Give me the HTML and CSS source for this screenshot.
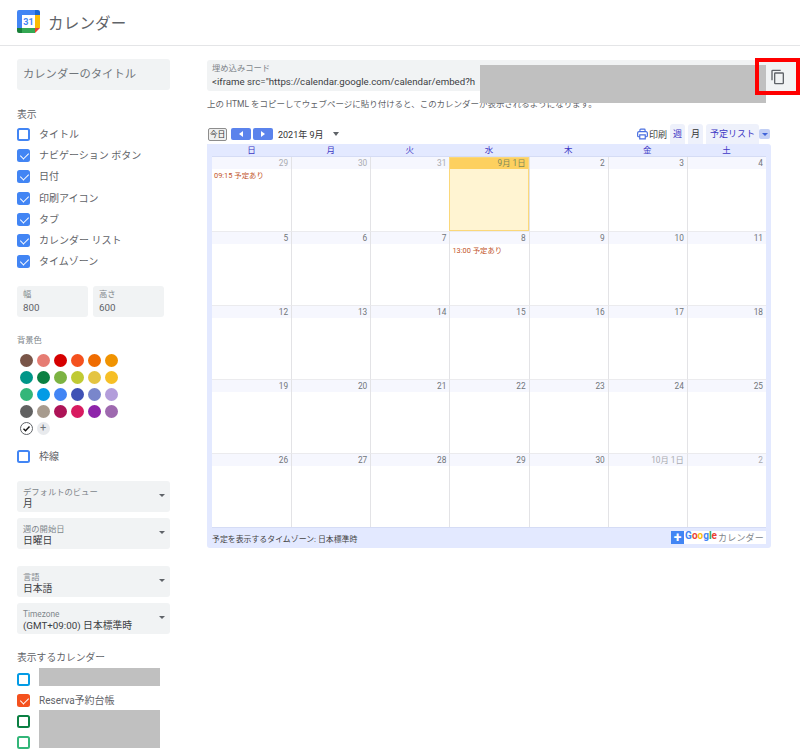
FILE: index.html
```html
<!DOCTYPE html>
<html lang="ja">
<head>
<meta charset="utf-8">
<title>カレンダー</title>
<link rel="stylesheet" href="styles.css">
</head>
<body>
<header class="topbar">
  <svg class="logo" viewBox="0 0 23 23" width="23" height="23">
    <rect x="5" y="5" width="13" height="13" fill="#fff"/>
    <path d="M2 0h16v5H5v13H0V2a2 2 0 0 1 2-2z" fill="#4285f4"/>
    <path d="M18 0h3a2 2 0 0 1 2 2v3h-5z" fill="#1967d2"/>
    <rect x="18" y="5" width="5" height="13" fill="#fbbc04"/>
    <rect x="5" y="18" width="13" height="5" fill="#34a853"/>
    <path d="M0 18h5v5H2a2 2 0 0 1-2-2z" fill="#188038"/>
    <path d="M18 18h5l-5 5z" fill="#ea4335"/>
    <text x="11.500" y="15" class="logo-num">31</text>
  </svg>
  <span class="app-name">カレンダー</span>
</header>
<div class="page">
  <aside class="side">
    <div class="field title-field">カレンダーのタイトル</div>
    <h2 class="sec">表示</h2>
    <ul class="checks">
      <li class="check"><span class="box"></span>タイトル</li>
      <li class="check"><span class="box on"></span>ナビゲーション ボタン</li>
      <li class="check"><span class="box on"></span>日付</li>
      <li class="check"><span class="box on"></span>印刷アイコン</li>
      <li class="check"><span class="box on"></span>タブ</li>
      <li class="check"><span class="box on"></span>カレンダー リスト</li>
      <li class="check"><span class="box on"></span>タイムゾーン</li>
    </ul>
    <div class="size-row">
      <div class="field size"><span class="small">幅</span><span class="val">800</span></div>
      <div class="field size"><span class="small">高さ</span><span class="val">600</span></div>
    </div>
    <div class="small bg-label">背景色</div>
    <div class="swatches">
      <i class="sw c1"></i><i class="sw c2"></i><i class="sw c3"></i><i class="sw c4"></i><i class="sw c5"></i><i class="sw c6"></i>
      <i class="sw c7"></i><i class="sw c8"></i><i class="sw c9"></i><i class="sw c10"></i><i class="sw c11"></i><i class="sw c12"></i>
      <i class="sw c13"></i><i class="sw c14"></i><i class="sw c15"></i><i class="sw c16"></i><i class="sw c17"></i><i class="sw c18"></i>
      <i class="sw c19"></i><i class="sw c20"></i><i class="sw c21"></i><i class="sw c22"></i><i class="sw c23"></i><i class="sw c24"></i>
      <i class="sw sel"><svg viewBox="0 0 13 13" width="13" height="13"><path d="M3.500 6.800l2 2 4-4.300" fill="none" stroke="#111" stroke-width="1.400"/></svg></i>
      <i class="sw add">+</i>
    </div>
    <div class="check border-check"><span class="box"></span>枠線</div>
    <div class="selects first">
      <div class="field select"><span class="small">デフォルトのビュー</span><span class="val">月</span><b class="caret"></b></div>
      <div class="field select"><span class="small">週の開始日</span><span class="val">日曜日</span><b class="caret"></b></div>
    </div>
    <div class="selects second">
      <div class="field select"><span class="small">言語</span><span class="val">日本語</span><b class="caret"></b></div>
      <div class="field select"><span class="small">Timezone</span><span class="val">(GMT+09:00) 日本標準時</span><b class="caret"></b></div>
    </div>
    <h2 class="sec cal-head">表示するカレンダー</h2>
    <ul class="checks cals">
      <li class="check"><span class="box sky"></span></li>
      <li class="check"><span class="box on orange"></span>Reserva予約台帳</li>
      <li class="check"><span class="box dark"></span></li>
      <li class="check"><span class="box mint"></span></li>
    </ul>
    <div class="mask mask-a"></div>
    <div class="mask mask-b"></div>
  </aside>
  <main class="main">
    <div class="field embed">
      <span class="small">埋め込みコード</span>
      <span class="code">&lt;iframe src="https://calendar.google.com/calendar/embed?h</span>
    </div>
    <p class="hint">上の HTML をコピーしてウェブページに貼り付けると、このカレンダーが表示されるようになります。</p>
    <div class="toolbar">
      <span class="today">今日</span>
      <span class="nav"><i class="tri left"></i></span>
      <span class="nav"><i class="tri right"></i></span>
      <span class="month">2021年 9月</span>
      <b class="caret month-caret"></b>
      <span class="spacer"></span>
      <svg class="print-icon" viewBox="0 0 12 12" width="11" height="12"><path d="M3.200 3.500V1.500a.8.8 0 0 1 .8-.8h4a.8.8 0 0 1 .8.8v2M3 9H1.800A1.100 1.100 0 0 1 .7 7.900V5a1.500 1.500 0 0 1 1.500-1.500h7.600A1.500 1.500 0 0 1 11.300 5v2.900A1.100 1.100 0 0 1 10.200 9H9M3 7h6v4.300H3z" fill="none" stroke="#4a6fe0" stroke-width="1.300"/></svg>
      <span class="print">印刷</span>
      <span class="tab link">週</span>
      <span class="tab active">月</span>
      <span class="tab link wide">予定リスト</span>
      <span class="tab-drop"><i class="tri down"></i></span>
    </div>
    <section class="cal">
      <div class="dow"><span>日</span><span>月</span><span>火</span><span>水</span><span>木</span><span>金</span><span>土</span></div>
      <div class="grid">
        <div class="cell"><div class="date off">29</div><div class="ev">09:15 予定あり</div></div>
        <div class="cell"><div class="date off">30</div></div>
        <div class="cell"><div class="date off">31</div></div>
        <div class="cell now"><div class="date">9月 1日</div></div>
        <div class="cell"><div class="date">2</div></div>
        <div class="cell"><div class="date">3</div></div>
        <div class="cell"><div class="date">4</div></div>
        <div class="cell"><div class="date">5</div></div>
        <div class="cell"><div class="date">6</div></div>
        <div class="cell"><div class="date">7</div></div>
        <div class="cell"><div class="date">8</div><div class="ev">13:00 予定あり</div></div>
        <div class="cell"><div class="date">9</div></div>
        <div class="cell"><div class="date">10</div></div>
        <div class="cell"><div class="date">11</div></div>
        <div class="cell"><div class="date">12</div></div>
        <div class="cell"><div class="date">13</div></div>
        <div class="cell"><div class="date">14</div></div>
        <div class="cell"><div class="date">15</div></div>
        <div class="cell"><div class="date">16</div></div>
        <div class="cell"><div class="date">17</div></div>
        <div class="cell"><div class="date">18</div></div>
        <div class="cell"><div class="date">19</div></div>
        <div class="cell"><div class="date">20</div></div>
        <div class="cell"><div class="date">21</div></div>
        <div class="cell"><div class="date">22</div></div>
        <div class="cell"><div class="date">23</div></div>
        <div class="cell"><div class="date">24</div></div>
        <div class="cell"><div class="date">25</div></div>
        <div class="cell"><div class="date">26</div></div>
        <div class="cell"><div class="date">27</div></div>
        <div class="cell"><div class="date">28</div></div>
        <div class="cell"><div class="date">29</div></div>
        <div class="cell"><div class="date">30</div></div>
        <div class="cell"><div class="date off">10月 1日</div></div>
        <div class="cell"><div class="date off">2</div></div>
      </div>
      <div class="cal-foot">
        <span class="tz">予定を表示するタイムゾーン: 日本標準時</span>
        <span class="badge"><span class="plus">+</span><span class="gword"><span class="gb">G</span><span class="gr">o</span><span class="gy">o</span><span class="gb">g</span><span class="gg">l</span><span class="gr">e</span></span><span class="bword">カレンダー</span></span>
      </div>
    </section>
    <div class="mask mask-c"></div>
    <div class="copy-frame">
      <svg viewBox="0 0 24 24" width="16" height="16"><path d="M16 1H4a2 2 0 0 0-2 2v14h2V3h12V1zm3 4H8a2 2 0 0 0-2 2v14a2 2 0 0 0 2 2h11a2 2 0 0 0 2-2V7a2 2 0 0 0-2-2zm0 16H8V7h11v14z" fill="#5f6368"/></svg>
    </div>
  </main>
</div>
</body>
</html>
```

FILE: styles.css
```css
* { box-sizing: border-box; }
html, body { margin: 0; padding: 0; }
body {
  width: 800px;
  height: 756px;
  overflow: hidden;
  background: #fff;
  color: #5f6368;
  font-family: Roboto, "Noto Sans CJK JP", sans-serif;
  font-size: 10.500px;
}
ul { list-style: none; margin: 0; padding: 0; }
h2, p { margin: 0; font-weight: 400; }

.topbar {
  height: 46px;
  display: flex;
  align-items: center;
  gap: 8px;
  padding: 0 17px 2px;
  border-bottom: 1px solid #e4e5e7;
}
.logo { display: block; }
.logo-num { font: 700 9px Roboto, sans-serif; fill: #4285f4; text-anchor: middle; }
.app-name { font-size: 15.500px; color: #5f6368; letter-spacing: .2px; }

.page { display: flex; align-items: flex-start; padding-left: 17px; position: relative; }
.side { width: 153px; flex: none; padding-top: 13px; position: relative; }
.main { flex: 1; margin-left: 37px; padding-top: 14px; position: relative; }

.field { background: #f1f3f4; border-radius: 3px; }
.title-field { height: 31px; line-height: 31px; padding-left: 6px; font-size: 11.300px; color: #70757a; }
.sec { font-size: 9.800px; color: #5f6368; line-height: 14px; }
.side > .sec:nth-of-type(1) { margin-top: 18px; }

.checks { margin-top: 6px; display: flex; flex-direction: column; gap: 8.200px; }
.check { display: flex; align-items: center; gap: 9px; height: 13px; line-height: 13px; color: #5f6368; font-size: 10px; white-space: nowrap; }
.box { width: 13px; height: 13px; flex: none; border: 2px solid #4285f4; border-radius: 2.500px; background: #fff; position: relative; }
.box.on { background: #4285f4; }
.box.on::after {
  content: "";
  position: absolute;
  left: 2.500px;
  top: 0;
  width: 4px;
  height: 7px;
  border: solid #fff;
  border-width: 0 1.500px 1.500px 0;
  transform: rotate(45deg);
}
.box.sky { border-color: #039be5; }
.box.orange { background: #f4511e; border-color: #f4511e; }
.box.dark { border-color: #0b8043; }
.box.mint { border-color: #33b679; }

.size-row { display: flex; gap: 5px; margin-top: 18px; width: 147px; }
.size { flex: 1; height: 31px; padding: 3px 6px 0; display: flex; flex-direction: column; }
.small { font-size: 8.300px; color: #80868b; line-height: 11px; white-space: nowrap; }
.val { font-size: 9.800px; color: #3c4043; line-height: 15px; white-space: nowrap; }
.size .val { color: #5f6368; }
.bg-label { margin-top: 18px; }

.swatches { display: grid; grid-template-columns: repeat(6, 13px); gap: 4px; margin: 8px 0 0 2.500px; }
.sw { display: block; width: 13px; height: 13px; border-radius: 50%; }
.c1 { background: #795548; } .c2 { background: #e67c73; } .c3 { background: #d50000; } .c4 { background: #f4511e; } .c5 { background: #ef6c00; } .c6 { background: #f09300; }
.c7 { background: #009688; } .c8 { background: #0b8043; } .c9 { background: #7cb342; } .c10 { background: #c0ca33; } .c11 { background: #e4c441; } .c12 { background: #f6bf26; }
.c13 { background: #33b679; } .c14 { background: #039be5; } .c15 { background: #4285f4; } .c16 { background: #3f51b5; } .c17 { background: #7986cb; } .c18 { background: #b39ddb; }
.c19 { background: #616161; } .c20 { background: #a79b8e; } .c21 { background: #ad1457; } .c22 { background: #d81b60; } .c23 { background: #8e24aa; } .c24 { background: #9e69af; }
.sel { border: 1px solid #5f6368; background: #fff; position: relative; }
.sel svg { position: absolute; left: -1px; top: -1px; }
.add { background: #e8eaed; color: #70757a; font: 400 11px/12px Roboto, sans-serif; font-style: normal; text-align: center; }

.border-check { margin-top: 15px; }
.selects { display: flex; flex-direction: column; gap: 6.500px; }
.selects.first { margin-top: 18px; }
.selects.second { margin-top: 17.500px; }
.select { height: 30.500px; padding: 6px 6px 0; display: flex; flex-direction: column; position: relative; }
.select .val { line-height: 14px; margin-top: -1px; }
.caret { position: absolute; right: 5px; top: 13px; width: 0; height: 0; border-left: 3px solid transparent; border-right: 3px solid transparent; border-top: 3px solid #5f6368; }

.cal-head { margin-top: 17px; }
.cals { margin-top: 8px; }
.mask { position: absolute; background: #c0c0c0; }
.mask-a { left: 22px; top: 622px; width: 121px; height: 18px; }
.mask-b { left: 22px; top: 664px; width: 121px; height: 38px; }

.embed { width: 593px; height: 31px; padding: 3px 5px 0; display: flex; flex-direction: column; }
.code { font-size: 9.700px; color: #3c4043; line-height: 15px; white-space: nowrap; overflow: hidden; }
.hint { margin-top: 7px; font-size: 8.470px; line-height: 12px; color: #5f6368; white-space: nowrap; }
.mask-c { left: 273px; top: 19px; width: 286px; height: 38px; }
.copy-frame {
  position: absolute;
  left: 548px;
  top: 12px;
  width: 45px;
  height: 37px;
  border: 4px solid #f00;
  display: flex;
  align-items: center;
  justify-content: center;
  padding-left: 1px;
}

.toolbar { display: flex; align-items: center; height: 20px; margin-top: 14px; width: 564px; }
.today { width: 19px; margin-left: 1px; text-align: center; border: 1px solid #8d8d8d; background: #efefef; border-radius: 2px; font-size: 7.800px; color: #333; height: 13px; line-height: 11px; margin-right: 4px; white-space: nowrap; }
.nav { width: 20px; height: 12px; background: #5b83ec; border-radius: 2px; margin-right: 2px; display: flex; align-items: center; justify-content: center; }
.tri { display: block; width: 0; height: 0; }
.tri.left { border-top: 3.500px solid transparent; border-bottom: 3.500px solid transparent; border-right: 4px solid #fff; }
.tri.right { border-top: 3.500px solid transparent; border-bottom: 3.500px solid transparent; border-left: 4px solid #fff; }
.tri.down { border-left: 3px solid transparent; border-right: 3px solid transparent; border-top: 3.500px solid #3f63d8; }
.month { font-size: 9px; color: #333; margin-left: 3px; white-space: nowrap; }
.month-caret { position: static; margin-left: 9px; border-left-width: 3.500px; border-right-width: 3.500px; border-top-width: 4px; }
.spacer { flex: 1; }
.print { font-size: 9px; color: #444; margin: 0 3px 0 1px; white-space: nowrap; }
.tab { height: 20px; background: #eef1fb; border-radius: 3px 3px 0 0; padding: 0 3px; font-size: 9px; line-height: 21px; margin-right: 3px; white-space: nowrap; }
.tab.wide { padding: 0 4px; margin-right: 0; }
.tab.link { color: #3d37c4; }
.tab.active { color: #333; }
.tab-drop { width: 11px; height: 10px; background: #c3d0f5; border-radius: 2px; margin-right: 1px; display: flex; align-items: center; justify-content: center; }

.cal { width: 564px; height: 404px; background: #e3e9ff; border-radius: 0 3px 3px 3px; padding: 0 5px; display: flex; flex-direction: column; }
.dow { height: 12px; display: grid; grid-template-columns: repeat(7, 1fr); text-align: center; font-size: 8.500px; line-height: 12px; color: #3d37c4; flex: none; }
.grid { height: 372px; flex: none; display: grid; grid-template-columns: repeat(7, 1fr); grid-template-rows: repeat(5, 1fr); background: #fff; border-top: 1px solid #d5dcf5; border-bottom: 1px solid #d5dcf5; }
.cell { border-left: 1px solid #e3e3e6; border-top: 1px solid #ebebee; min-width: 0; }
.cell:nth-child(7n+1) { border-left: 0; }
.cell:nth-child(-n+7) { border-top: 0; }
.date { height: 12px; background: #f6f7fe; text-align: right; padding-right: 3px; font-size: 8.300px; line-height: 12px; color: #70757a; white-space: nowrap; }
.date.off { color: #a9abb0; }
.now { background: #fff4d2; outline: 1px solid #fbd87a; outline-offset: -1px; }
.now .date { background: #fdd05f; color: #7d8a5a; }
.ev { margin: .5px 0 0 2px; font-size: 7.400px; line-height: 11px; color: #c2552a; white-space: nowrap; }

.cal-foot { flex: 1; display: flex; align-items: flex-start; justify-content: space-between; padding-top: 3px; }
.tz { font-size: 7.900px; color: #444; white-space: nowrap; line-height: 12px; padding-top: 3px; }
.badge { display: flex; align-items: center; height: 13px; background: #fff; position: relative; }
.plus { width: 13px; height: 13px; background: #4285f4; color: #fff; font: 700 14px/12px Roboto, sans-serif; text-align: center; }
.gword { font: 700 10px/10px Roboto, sans-serif; margin: -4px 1px 0 1px; }
.gb { color: #4285f4; } .gr { color: #ea4335; } .gy { color: #fbbc04; } .gg { color: #34a853; }
.bword { font-size: 9px; color: #80868b; padding-right: 2px; letter-spacing: .2px; }
```
